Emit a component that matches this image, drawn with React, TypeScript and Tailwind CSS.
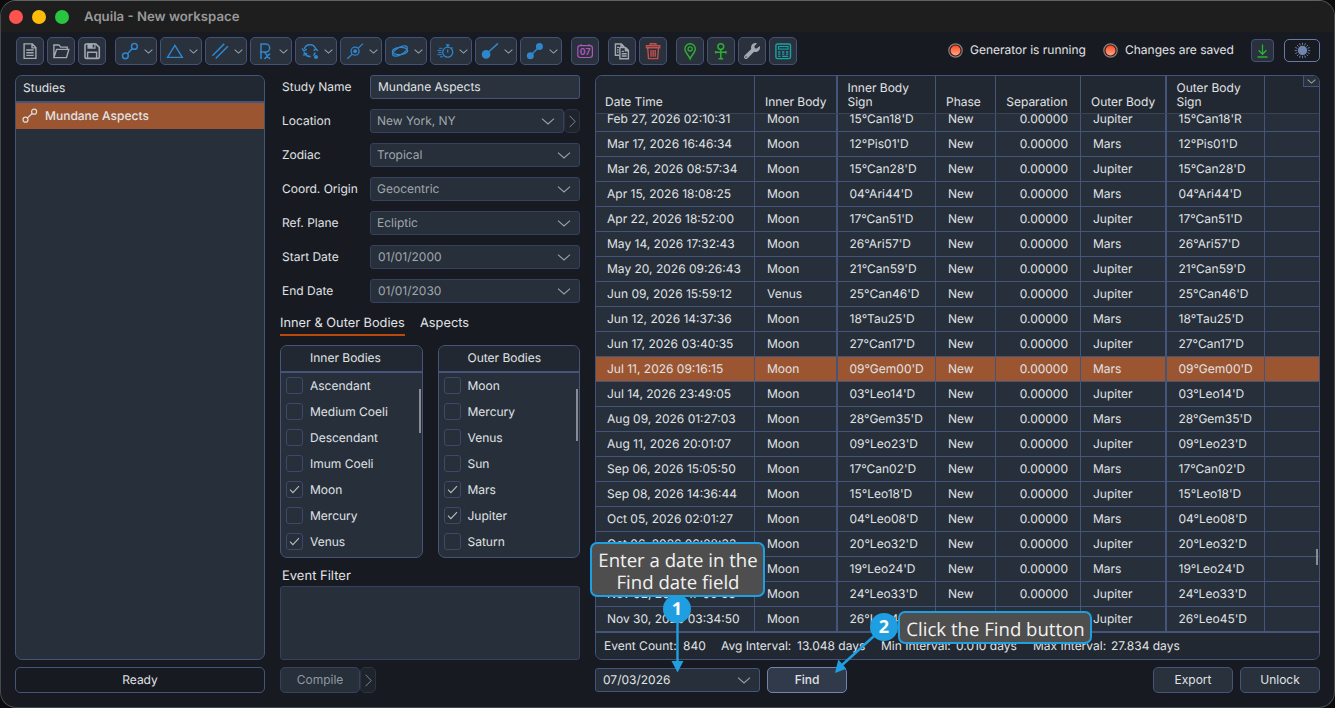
import React from 'react';
import { FaWrench } from 'react-icons/fa';

const BLUE = '#2f86cc';
const GRAY = '#a3a9b2';
const GREEN = '#2fae33';

function Chevron({ className = '', w = 14, h = 7 }: { className?: string; w?: number; h?: number }) {
  return (
    <svg width={w} height={h} viewBox="0 0 14 7" fill="none" stroke="#9aa1ab" strokeWidth={w < 12 ? 1.6 : 1.1} className={className}>
      <path d="M1 .6 7 6l6-5.4" />
    </svg>
  );
}

function ToolButton({ children }: { children: React.ReactNode }) {
  return (
    <button className="flex h-[28px] w-[28px] shrink-0 items-center justify-center rounded-[5px] border border-[#44527a] bg-[#28313c]">
      {children}
    </button>
  );
}

function Icon({ color, children }: { color: string; children: React.ReactNode }) {
  return (
    <svg width="28" height="28" viewBox="0 0 28 28" fill="none" stroke={color} strokeWidth="1.3" className="shrink-0">
      {children}
    </svg>
  );
}

function DropButton({ children }: { children: React.ReactNode }) {
  return (
    <button className="flex h-[28px] w-[42px] shrink-0 items-center rounded-[5px] border border-[#44527a] bg-[#28313c]">
      <span className="-ml-px flex">
        <Icon color={BLUE}>{children}</Icon>
      </span>
      <Chevron w={9} h={5} className="ml-px" />
    </button>
  );
}

const dropIcons: React.ReactNode[] = [
  <g key="a" strokeWidth="1.5">
    <circle cx="10.4" cy="18.8" r="2.9" />
    <circle cx="19.4" cy="9.4" r="2.9" />
    <path d="m12.5 16.7 4.8-5.1" />
  </g>,
  <path key="b" d="M14.9 8.3 22.3 20.4H7.5Z" strokeWidth="1.4" />,
  <path key="c" d="M7.4 18.8 19.2 6.9M10.7 21.5 22.9 9.2" strokeWidth="1.5" />,
  <path key="d" d="M11 22V7.1h4.7a4 4 0 0 1 0 8H11M14.4 15.1 20 22M20 16.6 14.4 22M9.9 15.1h2" strokeWidth="1.5" />,
  <g key="e" strokeWidth="1.5">
    <path d="M9.3 12a6 6 0 0 1 11.3-.3M20.300 15.500a6 6 0 0 1-2 2.900M15.800 19.500a6 6 0 0 1-5.900-3.200" />
    <path d="m7 11.400 2 2.600 2.700-1.800M18.600 13.700l2.200-2 2 2.300M8.900 18.900l.5-3 2.900.900" strokeWidth="1.4" />
    <circle cx="21" cy="20" r="2.1" fill={BLUE} stroke="none" />
  </g>,
  <g key="f" strokeWidth="1.3">
    <circle cx="15.1" cy="14.2" r="4" />
    <circle cx="15.1" cy="14.2" r="1.9" fill={BLUE} stroke="none" />
    <path d="m7.3 21.8 4.9-4.7M18 11.4l5-4.8" />
  </g>,
  <g key="g" strokeWidth="1.3">
    <ellipse cx="15" cy="14" rx="8.2" ry="3.6" transform="rotate(-30 15 14)" />
    <ellipse cx="15" cy="14" rx="7.7" ry="3.6" transform="rotate(-4 15 14)" />
  </g>,
  <g key="h" strokeWidth="1.3">
    <circle cx="17.7" cy="15.2" r="5" />
    <path d="M17.7 15.5v-3M16 8h3.4M17.7 8v2M21.5 10.4l1 1" />
    <path d="M9 11.3h3.4M7.5 13.5h4M8.2 15.6h3.3M7.5 17.7h4.4M10 19.8h3" strokeWidth="1" />
  </g>,
  <g key="i" strokeWidth="1.5">
    <circle cx="11.1" cy="17.4" r="4.3" fill={BLUE} stroke="none" />
    <path d="m13 15.5 10-9.1" />
  </g>,
  <g key="j" strokeWidth="1.6">
    <circle cx="10.3" cy="18.7" r="3.5" fill={BLUE} stroke="none" />
    <circle cx="19.4" cy="9.6" r="3.5" fill={BLUE} stroke="none" />
    <path d="m10.3 18.7 9-9" />
  </g>,
];

function Toolbar() {
  return (
    <div className="flex h-[43px] items-start pl-[15px] pr-[14px] pt-[5px]">
      <div className="flex gap-[3px]">
        <ToolButton>
          <Icon color={GRAY}>
            <path d="M8.1 6.9h8.3l3.5 3.6v10.9H8.1ZM16 7v3.9h3.9M10.3 13h7.4M10.3 15.7h7.4M10.3 18.4h7.4" strokeWidth="1.4" />
          </Icon>
        </ToolButton>
        <ToolButton>
          <Icon color={GRAY}>
            <path d="M6.9 20.6V8h5l1.8 2.1h6.5v2.2M6.9 20.6l2.7-8.2h12.2l-2.3 8.2Z" strokeWidth="1.4" />
          </Icon>
        </ToolButton>
        <ToolButton>
          <Icon color={GRAY}>
            <path d="M7 8.2c0-.8.4-1.2 1.2-1.2h9.7l3.4 3.4v9.8c0 .8-.4 1.2-1.2 1.2H8.2c-.8 0-1.2-.4-1.2-1.2Z" strokeWidth="1.6" />
            <path d="M9.4 6.6h8.2v5.2H9.4Z" fill={GRAY} stroke="none" />
            <path d="M14.7 7.7h1.6v2.8h-1.6Z" fill="#28313c" stroke="none" />
            <path d="M9.6 21v-5.7h9V21" strokeWidth="1.4" />
          </Icon>
        </ToolButton>
      </div>
      <div className="ml-[9px] flex gap-[3px]">
        {dropIcons.map((ic, i) => (
          <DropButton key={i}>{ic}</DropButton>
        ))}
      </div>
      <div className="ml-[9px] flex">
        <ToolButton>
          <Icon color="#b057bd">
            <rect x="6.8" y="8.6" width="14.6" height="11.9" rx="2.4" strokeWidth="1.2" />
            <path d="M10.2 7.2v1.6M18 7.2v1.6" />
            <text x="14.1" y="17.9" textAnchor="middle" fill="#b057bd" stroke="none" fontFamily="Inter, sans-serif" fontWeight="700" fontSize="8.6">
              07
            </text>
          </Icon>
        </ToolButton>
      </div>
      <div className="ml-[9px] flex gap-[3px]">
        <ToolButton>
          <Icon color={GRAY}>
            <path d="M11.4 18.2H7.4V7h6l2.6 2.6v1M13 7v3h2.6" strokeWidth="1.4" />
            <path d="M11.9 10.6h5.8l2.7 2.8v8.3h-8.5ZM17.4 10.8v3h3M13.7 14.4h2.2M13.7 16.7h5M13.7 19h5" strokeWidth="1.4" />
            <path d="M9 10.4h2M9 12.8h1.6M9 15.2h1.6" strokeWidth="1.2" />
          </Icon>
        </ToolButton>
        <ToolButton>
          <Icon color="#c4504c">
            <path d="M7.5 8.8h13.2v1.9H7.5ZM11.3 8.6V6.7h5.6v1.9M8.7 11l.8 10.6h9.2l.8-10.6M12 13v6.8M14.1 13v6.8M16.2 13v6.8" strokeWidth="1.4" />
          </Icon>
        </ToolButton>
      </div>
      <div className="ml-[9px] flex gap-[3px]">
        <ToolButton>
          <Icon color={GREEN}>
            <path d="M14.1 21.8c-1-3.1-5.2-6.2-5.2-9.9a5.2 5.2 0 0 1 10.4 0c0 3.7-4.2 6.8-5.2 9.9Z" strokeWidth="1.4" />
            <circle cx="14.1" cy="11.9" r="2.1" />
          </Icon>
        </ToolButton>
        <ToolButton>
          <Icon color={GREEN}>
            <circle cx="13.8" cy="9.6" r="2.9" strokeWidth="1.5" />
            <path d="M13.8 12.5v9.3M8.3 15.2h11M11.5 21.7h4.6M8.7 13.9v2.6M18.9 13.9v2.6" strokeWidth="1.5" />
          </Icon>
        </ToolButton>
        <ToolButton>
          <FaWrench size={16} color="#a3a9b2" />
        </ToolButton>
        <ToolButton>
          <Icon color="#17a3a6">
            <rect x="6.9" y="7" width="14.6" height="14.6" rx="1.5" strokeWidth="1.4" />
            <rect x="9.5" y="9.5" width="9.5" height="2.6" strokeWidth="1.1" />
            <path d="M9.200 15h2.200M13.100 15h2.200M17 15h2.200M9.200 17.200h2.200M13.100 17.200h2.200M17 17.200h2.200M9.200 19.400h2.200M13.100 19.400h6.100" strokeWidth="1.3" />
          </Icon>
        </ToolButton>
      </div>
      <div className="ml-auto flex h-[28px] items-center">
        <Led />
        <span className="mb-[3px] ml-[7px] w-[117px] whitespace-nowrap leading-[24px]">Generator is running</span>
        <span className="ml-[16px] flex">
          <Led />
        </span>
        <span className="mb-[3px] ml-[7px] w-[110px] whitespace-nowrap leading-[24px]">Changes are saved</span>
        <button className="-mt-px ml-[16px] flex h-[23px] w-[23px] items-center justify-center rounded-[4px] border border-[#44527a] bg-[#28313c]">
          <svg width="11" height="14" viewBox="0 0 11 14" fill="none" stroke={GREEN} strokeWidth="1.3">
            <path d="M5.5.5V10M1.6 6.2l3.9 4 3.9-4M.5 13h10" />
          </svg>
        </button>
        <button className="-mt-px ml-[10px] flex h-[23px] w-[36px] items-center justify-center rounded-[5px] border border-[#667aa8]">
          <svg width="17" height="17" viewBox="0 0 17 17" stroke="#7f90b8" strokeWidth="0.8">
            <circle cx="8.5" cy="8.5" r="4.7" fill="#7284b0" stroke="none" />
            {Array.from({ length: 16 }, (_, i) => (
              <path key={i} d="M8.5 2.9V.7" transform={`rotate(${i * 22.5} 8.5 8.5)`} />
            ))}
          </svg>
        </button>
      </div>
    </div>
  );
}

function Led() {
  return (
    <svg width="15" height="15" viewBox="0 0 15 15" className="-mt-px shrink-0">
      <defs>
        <linearGradient id="led" x1="0" y1="0" x2="0" y2="1">
          <stop offset="0" stopColor="#ff4b25" />
          <stop offset="1" stopColor="#ffa888" />
        </linearGradient>
      </defs>
      <circle cx="7.5" cy="7.5" r="6.7" fill="#4a1712" stroke="#85817f" strokeWidth="1.2" />
      <circle cx="7.5" cy="7.5" r="4.9" fill="url(#led)" />
    </svg>
  );
}

function Studies() {
  return (
    <div className="flex h-[585px] w-[250px] flex-col overflow-hidden rounded-[7px] border border-[#44547a] bg-[#262f3a]">
      <div className="h-[27px] border-b-2 border-[#44547a] bg-[#222831] pl-[7px] leading-[24px]">Studies</div>
      <div className="flex h-[26px] items-center bg-[#9c5531] font-medium">
        <svg width="28" height="26" viewBox="0 0 28 26" fill="none" stroke="#dedede" strokeWidth="1.2">
          <circle cx="9.5" cy="16.7" r="2.5" />
          <circle cx="18.1" cy="8.7" r="2.5" />
          <path d="m11.5 14.9 4.7-4.4" />
        </svg>
        <span className="mb-px ml-[1px] leading-[24px]">Mundane Aspects</span>
      </div>
    </div>
  );
}

const fields: [string, string][] = [
  ['Zodiac', 'Tropical'],
  ['Coord. Origin', 'Geocentric'],
  ['Ref. Plane', 'Ecliptic'],
  ['Start Date', '01/01/2000'],
  ['End Date', '01/01/2030'],
];

function Label({ children }: { children: React.ReactNode }) {
  return <span className="w-[90px] whitespace-nowrap pl-[2px] leading-[23px]">{children}</span>;
}

function Select({ value, className, date }: { value: string; className: string; date?: boolean }) {
  return (
    <div className={`flex h-[24px] items-center justify-between rounded-[3px] border border-[#35415f] bg-[#262f3a] text-[#a1a7ae] ${className}`}>
      <span className={date ? 'pl-[7px]' : 'pl-[6px]'}>{value}</span>
      <Chevron className="mr-[8px]" />
    </div>
  );
}

function NextButton({ className = '' }: { className?: string }) {
  return (
    <button className={`flex w-[16px] items-center justify-center rounded-[5px] border border-[#2c3443] bg-[#1f242c] ${className}`}>
      <svg width="7" height="13" viewBox="0 0 7 13" fill="none" stroke="#7e858f" strokeWidth="1">
        <path d="m.6.8 5.6 5.7-5.6 5.7" />
      </svg>
    </button>
  );
}

function BodyList({ title, items, thumb }: { title: string; items: [string, boolean][]; thumb: string }) {
  return (
    <div className="relative h-[213px] w-[142.5px] overflow-hidden rounded-[7px] border border-[#44547a] bg-[#262f3a]">
      <div className="h-[27px] border-b-2 border-[#44547a] bg-[#222831] pl-[29px] leading-[24px]">{title}</div>
      {items.map(([name, on]) => (
        <div key={name} className="flex h-[26px] items-center pl-[5px]">
          <span className="mb-px flex h-[17px] w-[17px] items-center justify-center rounded-[3px] border border-[#3c4969]">
            {on && (
              <svg width="11" height="9" viewBox="0 0 11 9" fill="none" stroke="#b9bec5" strokeWidth="1.1">
                <path d="m1 4.6 2.9 3L10 1.2" />
              </svg>
            )}
          </span>
          <span className="ml-[7px]">{name}</span>
        </div>
      ))}
      <div className={`absolute right-[1px] top-[43px] w-[2px] bg-[#8a8c8f] ${thumb}`} />
    </div>
  );
}

function StudyForm() {
  return (
    <div className="flex h-[585px] w-[300px] flex-col">
      <div className="flex flex-col gap-[10px]">
        <div className="flex">
          <Label>Study Name</Label>
          <div className="h-[24px] w-[210px] rounded-[3px] border border-[#44547a] bg-[#29323d] pl-[7px] leading-[22px]">Mundane Aspects</div>
        </div>
        <div className="flex">
          <Label>Location</Label>
          <Select value="New York, NY" className="w-[194px]" />
          <NextButton className="h-[24px]" />
        </div>
        {fields.map(([l, v]) => (
          <div key={l} className="flex">
            <Label>{l}</Label>
            <Select value={v} className="w-[210px]" date={l.endsWith('Date')} />
          </div>
        ))}
      </div>
      <div className="mt-[10px] flex gap-[15px] text-[12.8px]">
        <span className="h-[23px] w-[125px] whitespace-nowrap border-b-2 border-[#b74a0c] leading-[22px]">Inner &amp; Outer Bodies</span>
        <span className="leading-[22px]">Aspects</span>
      </div>
      <div className="mt-[9px] flex justify-between">
        <BodyList
          title="Inner Bodies"
          thumb="h-[44px]"
          items={[
            ['Ascendant', false],
            ['Medium Coeli', false],
            ['Descendant', false],
            ['Imum Coeli', false],
            ['Moon', true],
            ['Mercury', false],
            ['Venus', true],
          ]}
        />
        <BodyList
          title="Outer Bodies"
          thumb="h-[52px]"
          items={[
            ['Moon', false],
            ['Mercury', false],
            ['Venus', false],
            ['Sun', false],
            ['Mars', true],
            ['Jupiter', true],
            ['Saturn', false],
          ]}
        />
      </div>
      <div className="mt-[8px] pl-[2px] text-[13px] leading-[20px]">Event Filter</div>
      <div className="flex-1 rounded-[3px] border border-[#35415f] bg-[#262f3a]" />
    </div>
  );
}

const events: string[][] = [
  ['Mar 17, 2026 16:46:34', 'Moon', "12°Pis01'D", 'Mars', "12°Pis01'D"],
  ['Mar 26, 2026 08:57:34', 'Moon', "15°Can28'D", 'Jupiter', "15°Can28'D"],
  ['Apr 15, 2026 18:08:25', 'Moon', "04°Ari44'D", 'Mars', "04°Ari44'D"],
  ['Apr 22, 2026 18:52:00', 'Moon', "17°Can51'D", 'Jupiter', "17°Can51'D"],
  ['May 14, 2026 17:32:43', 'Moon', "26°Ari57'D", 'Mars', "26°Ari57'D"],
  ['May 20, 2026 09:26:43', 'Moon', "21°Can59'D", 'Jupiter', "21°Can59'D"],
  ['Jun 09, 2026 15:59:12', 'Venus', "25°Can46'D", 'Jupiter', "25°Can46'D"],
  ['Jun 12, 2026 14:37:36', 'Moon', "18°Tau25'D", 'Mars', "18°Tau25'D"],
  ['Jun 17, 2026 03:40:35', 'Moon', "27°Can17'D", 'Jupiter', "27°Can17'D"],
  ['Jul 11, 2026 09:16:15', 'Moon', "09°Gem00'D", 'Mars', "09°Gem00'D"],
  ['Jul 14, 2026 23:49:05', 'Moon', "03°Leo14'D", 'Jupiter', "03°Leo14'D"],
  ['Aug 09, 2026 01:27:03', 'Moon', "28°Gem35'D", 'Mars', "28°Gem35'D"],
  ['Aug 11, 2026 20:01:07', 'Moon', "09°Leo23'D", 'Jupiter', "09°Leo23'D"],
  ['Sep 06, 2026 15:05:50', 'Moon', "17°Can02'D", 'Mars', "17°Can02'D"],
  ['Sep 08, 2026 14:36:44', 'Moon', "15°Leo18'D", 'Jupiter', "15°Leo18'D"],
  ['Oct 05, 2026 02:01:27', 'Moon', "04°Leo08'D", 'Mars', "04°Leo08'D"],
  ['Oct 06, 2026 06:28:33', 'Moon', "20°Leo32'D", 'Jupiter', "20°Leo32'D"],
  ['Nov 02, 2026 14:11:06', 'Moon', "19°Leo24'D", 'Mars', "19°Leo24'D"],
  ['Nov 02, 2026 17:09:53', 'Moon', "24°Leo33'D", 'Jupiter', "24°Leo33'D"],
  ['Nov 30, 2026 03:34:50', 'Moon', "26°Leo45'D", 'Jupiter', "26°Leo45'D"],
];

const line = 'border-[#44547a]';

function EventRow({ e, selected, first, last }: { e: string[]; selected?: boolean; first?: boolean; last?: boolean }) {
  return (
    <div
      className={`grid shrink-0 grid-cols-[159px_83px_98px_60px_85px_86px_98px_1fr] overflow-hidden whitespace-nowrap leading-[24px] ${line} ${
        first ? 'h-[18px] content-end' : last ? 'h-[26px]' : 'h-[25px]'
      } ${last ? 'border-b-2' : 'border-b'} ${selected ? 'bg-[#9c5531]' : ''}`}
    >
      <div className={`border-r pl-[11px] ${line}`}>{e[0]}</div>
      <div className={`border-r-2 pl-[12px] ${line}`}>{e[1]}</div>
      <div className={`border-r pl-[11.5px] ${line}`}>{e[2]}</div>
      <div className={`border-r pl-[12px] ${line}`}>New</div>
      <div className={`border-r pr-[12px] text-right ${line}`}>0.00000</div>
      <div className={`border-r-2 pl-[12px] ${line}`}>{e[3]}</div>
      <div className={`border-r pl-[11.5px] ${line}`}>{e[4]}</div>
      <div />
    </div>
  );
}

function EventTable() {
  const head = 'flex items-end pb-[4px]';
  return (
    <div className={`relative flex h-[585px] w-[725px] flex-col overflow-hidden rounded-[7px] border bg-[#262f3a] ${line}`}>
      <div className="grid h-[38px] shrink-0 grid-cols-[159px_83px_98px_60px_85px_86px_98px_1fr] border-b border-[#3b4355] bg-[#222831] leading-[14px]">
        <div className={`${head} border-r pl-[9px] ${line}`}>Date Time</div>
        <div className={`${head} whitespace-nowrap border-r-2 pl-[10px] ${line}`}>Inner Body</div>
        <div className={`${head} border-r pl-[9.5px] ${line}`}>
          Inner Body
          <br />
          Sign
        </div>
        <div className={`${head} border-r pl-[10px] ${line}`}>Phase</div>
        <div className={`${head} justify-end border-r pr-[12.5px] ${line}`}>Separation</div>
        <div className={`${head} whitespace-nowrap border-r-2 pl-[10px] ${line}`}>Outer Body</div>
        <div className={`${head} border-r pl-[9.5px] ${line}`}>
          Outer Body
          <br />
          Sign
        </div>
        <div className="flex items-start justify-end">
          <span className={`flex h-[11px] w-[16px] items-center justify-center border-b border-l bg-[#28313c] ${line}`}>
            <Chevron w={9} h={5} />
          </span>
        </div>
      </div>
      <EventRow e={['Feb 27, 2026 02:10:31', 'Moon', "15°Can18'D", 'Jupiter', "15°Can18'R"]} first />
      {events.map((e, i) => (
        <EventRow key={e[0]} e={e} selected={i === 9} last={i === events.length - 1} />
      ))}
      <div className="flex flex-1 bg-[#222831] pl-[8px] leading-[25px]">
        <span className="w-[79px]">Event Count:</span>
        <span className="w-[38px]">840</span>
        <span className="w-[76px] whitespace-nowrap">Avg Interval:</span>
        <span className="w-[84px] whitespace-nowrap">13.048 days</span>
        <span className="w-[75px] whitespace-nowrap">Min Interval:</span>
        <span className="w-[77px] whitespace-nowrap">0.010 days</span>
        <span className="w-[78px] whitespace-nowrap">Max Interval:</span>
        <span className="whitespace-nowrap">27.834 days</span>
      </div>
      <div className="absolute right-[1px] top-[473px] h-[16px] w-[2px] bg-[#8a8c8f]" />
    </div>
  );
}

function BottomBar() {
  return (
    <div className="mt-[7px] flex h-[26px] items-center pl-[14px] pr-[14px]">
      <div className="h-[26px] w-[250px] rounded-[5px] border border-[#44547a] text-center leading-[23px]">Ready</div>
      <button className="ml-[15px] h-[26px] w-[80px] rounded-[5px] border border-[#35415f] bg-[#262f3a] leading-[24px] text-[#9299a2]">Compile</button>
      <NextButton className="h-[26px]" />
      <div className="ml-[219px] flex h-[24px] w-[165px] items-center justify-between rounded-[3px] border border-[#44547a] bg-[#262f3a]">
        <span className="pl-[7px]">07/03/2026</span>
        <Chevron className="mr-[8px]" />
      </div>
      <button className="ml-[7px] h-[26px] w-[80px] rounded-[5px] border-[1.5px] border-[#7384ad] bg-[#303a4a] font-medium">Find</button>
      <button className="ml-auto h-[26px] w-[80px] rounded-[5px] border border-[#44547a] bg-[#28313c]">Export</button>
      <button className="ml-[7px] h-[26px] w-[80px] rounded-[5px] border border-[#44547a] bg-[#28313c]">Unlock</button>
    </div>
  );
}

function Callouts() {
  const box =
    "absolute flex items-center justify-center rounded-[7px] border-2 border-[#1f9fe2] bg-[#4e4e4e] text-center font-['Open_Sans',sans-serif] text-[18.6px] leading-[22.5px] whitespace-nowrap text-[#f2f2f2]";
  const badge =
    "absolute flex h-[28px] w-[28px] items-center justify-center rounded-full bg-[#1f9fe2] font-['Open_Sans',sans-serif] text-[18px] font-bold leading-none text-white";
  return (
    <>
      <svg className="absolute left-[660px] top-[600px]" width="240" height="80" viewBox="660 600 240 80" fill="#1f9fe2" stroke="#1f9fe2">
        <path d="M677.5 610v54M884 627l-43 39" strokeWidth="2.4" />
        <path d="M671.5 661h12l-6 11.5ZM835 673l3.3-13.5 8 9.3Z" stroke="none" />
      </svg>
      <div className={`${box} left-[590px] top-[542px] h-[55px] w-[175px]`}>
        <span className="pl-px pt-[5px]">
          Enter a date in the
          <br />
          Find date field
        </span>
      </div>
      <div className={`${box} left-[898px] top-[611px] h-[33px] w-[194px]`}>
        <span className="pl-px pt-[5px]">Click the Find button</span>
      </div>
      <div className={`${badge} left-[663px] top-[595px]`}>1</div>
      <div className={`${badge} left-[870px] top-[613px]`}>2</div>
    </>
  );
}

export default function App() {
  return (
    <div className="relative h-[708px] w-[1335px] overflow-hidden bg-[#0c0c0e] font-['Inter',sans-serif] text-[12px] leading-[20px] text-[#e0e3e6] [text-rendering:geometricPrecision]">
      <div className="flex h-[708px] flex-col overflow-hidden rounded-[16px] border border-[#47484b] border-t-[#606163] bg-[#181a21]">
        <div className="flex h-[31px] shrink-0 items-center bg-[#1e1e1e] pl-[8px]">
          <span className="h-[14px] w-[14px] rounded-full bg-[#ff5350]" />
          <span className="ml-[9px] h-[14px] w-[14px] rounded-full bg-[#fdbc08]" />
          <span className="ml-[9px] h-[14px] w-[14px] rounded-full bg-[#29c440]" />
          <span className="ml-[15px] text-[13.2px] font-semibold text-[#98999a]">Aquila - New workspace</span>
        </div>
        <Toolbar />
        <div className="flex gap-[15px] pl-[14px]">
          <Studies />
          <StudyForm />
          <EventTable />
        </div>
        <BottomBar />
      </div>
      <Callouts />
    </div>
  );
}
